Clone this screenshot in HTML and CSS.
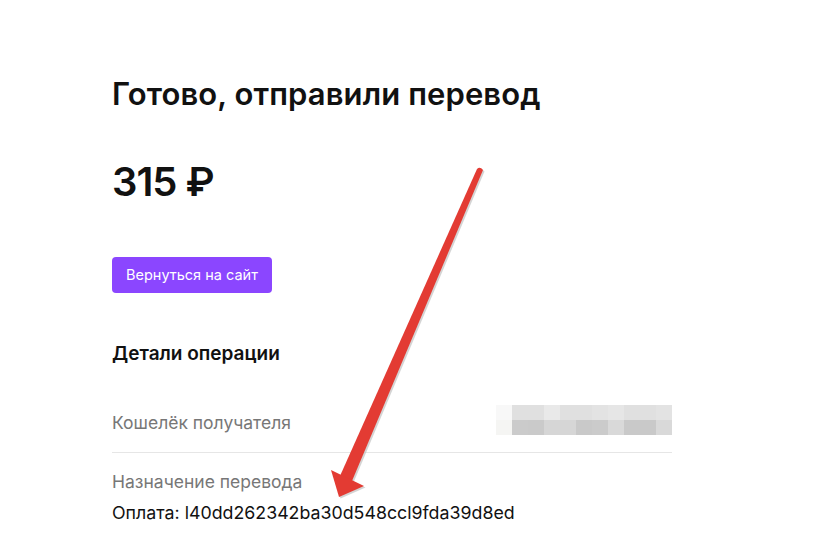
FILE: index.html
```html
<!DOCTYPE html>
<html lang="ru">
<head>
  <meta charset="utf-8">
  <meta name="viewport" content="width=device-width, initial-scale=1">
  <title>Готово, отправили перевод</title>
  <link rel="stylesheet" href="styles.css">
</head>
<body>

<div class="page">
  <h1 class="title">Готово, отправили перевод</h1>
  <div class="amount">315 ₽</div>
  <a class="back-btn" href="#">Вернуться на сайт</a>

  <h2 class="details-title">Детали операции</h2>

  <div class="row row-split">
    <span class="label label-low">Кошелёк получателя</span>
    <span class="pixels">
      <i style="background:#f8f8f8"></i><i style="background:#e0e0e0"></i><i style="background:#e0e0e0"></i><i style="background:#e9e9e9"></i><i style="background:#e0e0e0"></i><i style="background:#e0e0e0"></i><i style="background:#e3e3e3"></i><i style="background:#e6e6e6"></i><i style="background:#e0e0e0"></i><i style="background:#e0e0e0"></i><i style="background:#e3e3e3"></i>
      <i style="background:#f5f5f3"></i><i style="background:#cbcbcb"></i><i style="background:#cacaca"></i><i style="background:#d6d6d6"></i><i style="background:#d6d6d6"></i><i style="background:#c9c9c9"></i><i style="background:#cbcbcb"></i><i style="background:#d9d9d9"></i><i style="background:#c9c9c9"></i><i style="background:#c9c9c9"></i><i style="background:#d9d9d9"></i>
    </span>
  </div>

  <div class="row">
    <div class="label">Назначение перевода</div>
    <div class="value">Оплата: l40dd262342ba30d548ccl9fda39d8ed</div>
  </div>
</div>

<svg class="arrow" width="836" height="545" viewBox="0 0 836 545">
  <g transform="translate(1.5,1.5)" fill="#b8b8b8" opacity="0.6">
    <path d="M477 169 Q480 166 483 170 L352 481 L340 476 Z"/>
    <polygon points="331,470 364,486 339,497"/>
  </g>
  <path fill="#e33b33" d="M477 169 Q480 166 483 170 L352 481 L340 476 Z"/>
  <polygon fill="#e33b33" points="331,470 364,486 339,497"/>
</svg>

</body>
</html>
```

FILE: styles.css
```css
body {margin: 0; background: #fff; color: #111; font-family: Inter, "Noto Sans", sans-serif;}
.page {width: 560px; padding: 76px 0 0 112px;}
.title {margin: 0; font-size: 31px; line-height: 36px; font-weight: 600; letter-spacing: 0.1px;}
.amount {margin-top: 47px; font-size: 40px; line-height: 46px; font-weight: 600; letter-spacing: -1px;}
.back-btn {display: inline-block; margin-top: 52px; padding: 0 14px; height: 36px; line-height: 36px; background: #8b46ff; color: #fff; font-size: 14.5px; text-decoration: none; border-radius: 4px;}
.details-title {margin: 49px 0 0; font-size: 19px; line-height: 24px; font-weight: 600;}
.row {padding: 17px 0; border-bottom: 1px solid #e6e6e6;}
.row:last-child {border-bottom: 0;}
.row-split {display: flex; justify-content: space-between; align-items: center; margin-top: 39px; padding: 0 0 17px;}
.label {color: #777; font-size: 17.5px; line-height: 24px;}
.label-low {margin-top: 6px;}
.value {margin-top: 8px; font-size: 17.8px; line-height: 22px; color: #111;}
.pixels {display: grid; grid-template-columns: repeat(11, 16px); grid-auto-rows: 15px;}
.pixels i {display: block;}
.arrow {position: absolute; left: 0; top: 0; pointer-events: none;}
```
